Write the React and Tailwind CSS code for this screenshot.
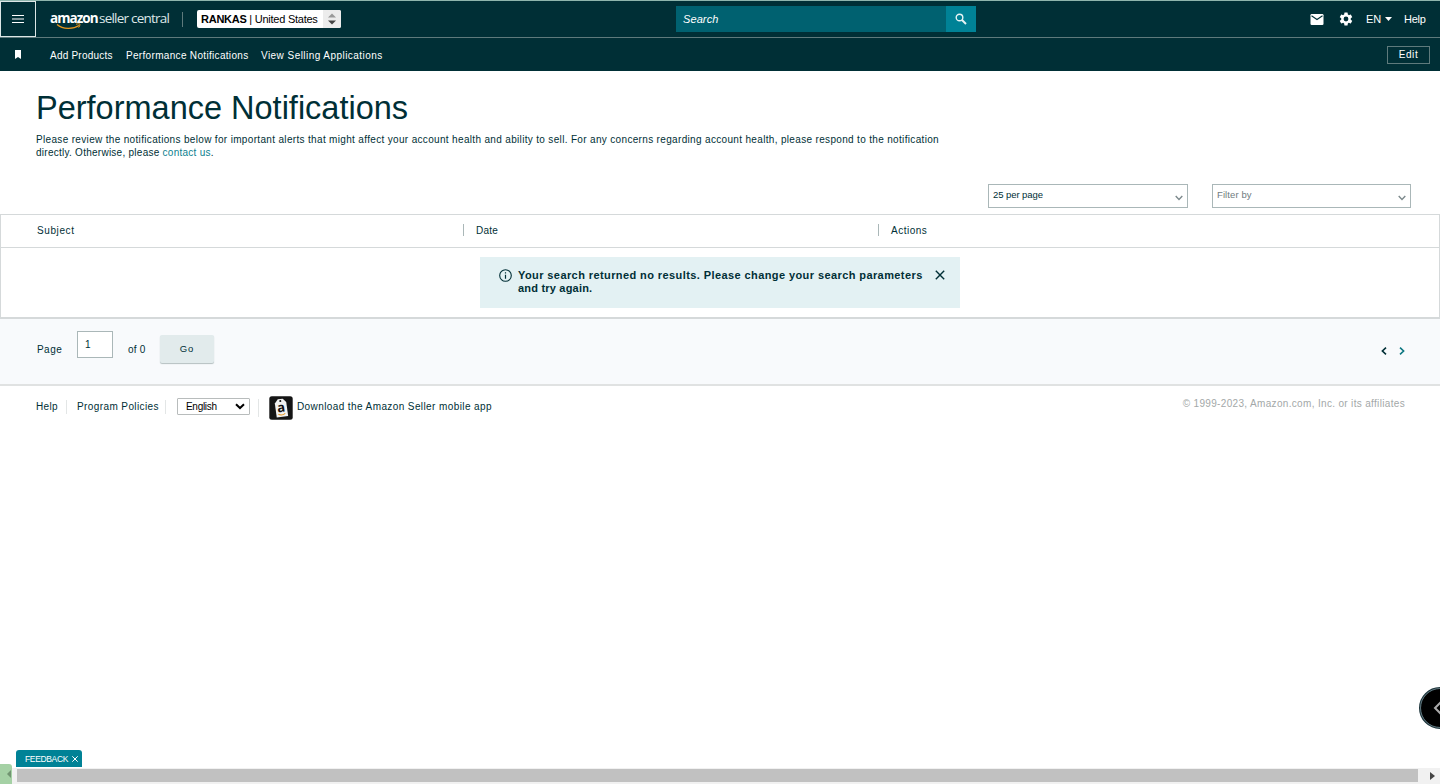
import React from "react";

const Chevron = ({ className }) => (
  <svg className={className} width="8" height="6" viewBox="0 0 8 6" fill="none" stroke="currentColor" strokeWidth="1.4">
    <path d="M0.7 1 L4 4.4 L7.3 1" />
  </svg>
);

function TopBar() {
  return (
    <header className="flex h-[38px] items-stretch border-t border-b border-t-[#8fb5ad] border-b-[#5e7a7c] bg-[#002f36] text-white">
      <button className="flex w-[36px] shrink-0 items-center justify-center border border-[#dce6e6]">
        <svg width="12" height="10" viewBox="0 0 12 10" stroke="#fff" strokeWidth="1.2">
          <path d="M0 1.5h12M0 5h12M0 8.5h12" />
        </svg>
      </button>
      <div className="ml-[14px] w-[120px] shrink-0 pt-[8px]">
        <div className="flex h-[18px] items-center whitespace-nowrap font-['Open_Sans',sans-serif] text-[13.5px] leading-[18px]">
          <span className="w-[49px] text-[13.5px] font-bold tracking-[-0.95px]">amazon</span>
          <span className="tracking-[-0.78px] text-[#dce6e8]">seller central</span>
        </div>
        <svg className="-mt-[4px] ml-[6px]" width="26" height="7" viewBox="0 0 26 7" fill="none" stroke="#e8961e" strokeWidth="1.3">
          <path d="M1 1.5C7 6.5 17 6.5 23 2.5" />
          <path d="M20 1.2C22.5 .6 24.2 .8 24 1.3C24 2.4 23.5 3.6 22.6 4.6" strokeWidth="1" />
        </svg>
      </div>
      <div className="mt-[11px] ml-[12px] h-[15px] w-px shrink-0 bg-[#5e7a7c]" />
      <div className="mt-[9px] ml-[14px] flex h-[18px] w-[144px] shrink-0 items-center justify-between rounded-[2px] bg-white pl-[4px] text-[11px] whitespace-nowrap text-black">
        <span className="tracking-[-0.25px]"><b>RANKAS</b> | United States</span>
        <span className="flex h-full w-[18px] items-center justify-center rounded-r-[2px] bg-[#ececec]">
          <svg width="8" height="12" viewBox="0 0 8 12">
            <path d="M0 4.5L4 .5L8 4.5z" fill="#999" />
            <path d="M0 7.5L4 11.5L8 7.5z" fill="#444" />
          </svg>
        </span>
      </div>
      <div className="mt-[5px] ml-[335px] flex h-[26px] w-[300px] shrink-0">
        <div className="w-[270px] bg-[#006170] pl-[7px] text-[11px] leading-[27px] tracking-[0.1px] italic">Search</div>
        <button className="flex w-[30px] items-center justify-center bg-[#008296]">
          <svg width="12" height="12" viewBox="0 0 12 12" fill="none" stroke="#e6f4f5">
            <circle cx="4.5" cy="4.5" r="3.3" strokeWidth="1.4" />
            <path d="M7 7L11 11" strokeWidth="2" />
          </svg>
        </button>
      </div>
      <div className="flex flex-1 items-center justify-end pr-[14px] text-[11px]">
        <svg width="14" height="11" viewBox="0 0 14 11">
          <rect x=".5" width="13" height="11" rx="1.2" fill="#fff" />
          <path d="M1.5 1.8L7 5.5L12.5 1.8" stroke="#002f36" strokeWidth="1.1" fill="none" />
        </svg>
        <svg className="ml-[14px]" width="16" height="16" viewBox="0 0 24 24" fill="#fff">
          <path d="M19.14 12.94c.04-.3.06-.61.06-.94s-.02-.64-.07-.94l2.03-1.58a.49.49 0 0 0 .12-.61l-1.92-3.32a.49.49 0 0 0-.59-.22l-2.39.96c-.5-.38-1.03-.7-1.62-.94L14.4 2.81a.48.48 0 0 0-.48-.41h-3.84a.47.47 0 0 0-.47.41l-.36 2.54c-.59.24-1.13.57-1.62.94l-2.39-.96a.48.48 0 0 0-.59.22L2.74 8.87a.47.47 0 0 0 .12.61l2.03 1.58c-.05.3-.09.63-.09.94s.02.64.07.94l-2.03 1.58a.49.49 0 0 0-.12.61l1.92 3.32c.12.22.37.29.59.22l2.39-.96c.5.38 1.03.7 1.62.94l.36 2.54c.05.24.24.41.48.41h3.84c.24 0 .44-.17.47-.41l.36-2.54c.59-.24 1.13-.56 1.62-.94l2.39.96c.22.08.47 0 .59-.22l1.92-3.32a.47.47 0 0 0-.12-.61zM12 15.6A3.6 3.6 0 1 1 12 8.4a3.6 3.6 0 0 1 0 7.2z" />
        </svg>
        <span className="ml-[12px] w-[15px] tracking-[-0.2px]">EN</span>
        <svg className="ml-[4px]" width="7" height="4" viewBox="0 0 7 4"><path d="M0 0h7L3.5 4z" fill="#fff" /></svg>
        <span className="ml-[12px] w-[22px] tracking-[-0.25px]">Help</span>
      </div>
    </header>
  );
}

function ShortcutBar() {
  return (
    <nav className="flex h-[33px] bg-[#002f36] pt-[8px] pr-[10px] pl-[15px] text-[10px] leading-[19px] whitespace-nowrap text-white">
      <svg className="mt-[4px]" width="6" height="9" viewBox="0 0 6 9"><path d="M0 0h6v9L3 7L0 9z" fill="#fff" /></svg>
      <span className="ml-[29px] w-[76px] tracking-[0.22px]">Add Products</span>
      <span className="w-[135px] tracking-[0.32px]">Performance Notifications</span>
      <span className="tracking-[0.45px]">View Selling Applications</span>
      <button className="ml-auto h-[18px] w-[43px] border border-[#5e7a7c] text-[10px] leading-[16px] tracking-[0.6px]">Edit</button>
    </nav>
  );
}

function Select({ label, className }) {
  return (
    <div className={"flex h-[24px] justify-between border border-[#aab7b8] pr-[4px] pl-[4px] text-[9.5px] leading-[20px] " + className}>
      <span>{label}</span>
      <Chevron className="mt-[10px] text-[#7c898c]" />
    </div>
  );
}

function Notice() {
  return (
    <div className="mx-auto mt-[9px] flex h-[51px] w-[480px] bg-[#e3f1f3] pt-[12px] pl-[19px]">
      <svg width="13" height="13" viewBox="0 0 13 13" fill="none" stroke="#002f36">
        <circle cx="6.5" cy="6.5" r="5.8" strokeWidth="1.1" />
        <path d="M6.5 5.7v4M6.5 3.2v1.3" strokeWidth="1.2" />
      </svg>
      <p className="ml-[6px] w-[416px] text-[11px] leading-[13px] font-bold tracking-[0.41px] whitespace-nowrap">
        Your search returned no results. Please change your search parameters
        <br />
        <span className="tracking-[0.2px]">and try again.</span>
      </p>
      <svg className="mt-[1px] ml-[1px]" width="10" height="10" viewBox="0 0 10 10" stroke="#002f36" strokeWidth="1.4"><path d="M.8 .8L9.2 9.2M9.2 .8L.8 9.2" /></svg>
    </div>
  );
}

function Pager() {
  return (
    <div className="flex h-[67px] border-b-2 border-[#e0e2e2] bg-[#f8fafc] pl-[37px] text-[10px] tracking-[0.4px]">
      <span className="mt-[24px] w-[40px] leading-[14px] tracking-[0.45px]">Page</span>
      <div className="mt-[12px] h-[27px] w-[36px] border border-[#aab7b8] bg-white pl-[7px] leading-[26px]">1</div>
      <span className="mt-[24px] ml-[15px] w-[32px] leading-[14px] tracking-[0.25px]">of 0</span>
      <button className="mt-[16px] h-[28px] w-[54px] rounded-[2px] bg-[#e2ebec] text-center text-[9.5px] leading-[28px] tracking-[1px] shadow-[0_1px_1px_#b4bfc0]">Go</button>
      <div className="mt-[28px] mr-[35px] ml-auto flex gap-[12px]">
        <svg width="6" height="8" viewBox="0 0 6 8" fill="none" stroke="#002f36" strokeWidth="1.6"><path d="M5 .7L1.4 4L5 7.3" /></svg>
        <svg width="6" height="8" viewBox="0 0 6 8" fill="none" stroke="#0b7680" strokeWidth="1.6"><path d="M1 .7L4.6 4L1 7.3" /></svg>
      </div>
    </div>
  );
}

function Footer() {
  return (
    <footer className="flex h-[40px] items-start pt-[10px] pl-[36px] text-[10px] leading-[22px] whitespace-nowrap">
      <span className="w-[30px] tracking-[0.3px]">Help</span>
      <span className="mt-[4px] h-[14px] w-px bg-[#e3e6e6]" />
      <span className="ml-[10px] w-[88px] tracking-[0.4px]">Program Policies</span>
      <span className="mt-[4px] h-[14px] w-px bg-[#e3e6e6]" />
      <div className="mt-[2px] ml-[11px] flex h-[17px] w-[73px] items-center justify-between rounded-[1px] border border-[#b8bcbc] pr-[4px] pl-[8px] leading-[17px] text-black">
        <span className="tracking-[-0.3px]">English</span>
        <svg width="10" height="7" viewBox="0 0 10 7" fill="none" stroke="#000" strokeWidth="2"><path d="M1 1.2L5 5L9 1.2" /></svg>
      </div>
      <span className="mt-[3px] ml-[8px] h-[18px] w-px bg-[#e3e6e6]" />
      <svg className="ml-[10px] shrink-0" width="24" height="24" viewBox="0 0 24 24">
        <rect x=".3" y=".3" width="23.4" height="23.4" rx="2.5" fill="#151515" />
        <g transform="rotate(-8 12 12)">
          <path d="M6.5 6.8L10 3h5l3 3.8v14H6.5z" fill="#f2f2f2" />
          <circle cx="12.3" cy="5" r="1" fill="#151515" />
          <text x="12.2" y="16" textAnchor="middle" fontSize="13" fontWeight="700" fill="#111" fontFamily="Open Sans, sans-serif">a</text>
          <path d="M8.5 17.8c2 1.3 5 1.3 7 0" stroke="#e8961e" fill="none" />
        </g>
      </svg>
      <span className="ml-[4px] tracking-[0.4px]">Download the Amazon Seller mobile app</span>
      <span className="mr-[35px] ml-auto leading-[16px] tracking-[0.33px] text-[#a3a8a8]">© 1999-2023, Amazon.com, Inc. or its affiliates</span>
    </footer>
  );
}

export default function App() {
  return (
    <div className="relative h-[784px] w-[1440px] overflow-hidden bg-white font-['Liberation_Sans',Arial,sans-serif] text-[#002f36]">
      <TopBar />
      <ShortcutBar />
      <section className="h-[113px] pt-[17px] pl-[36px]">
        <h1 className="text-[32.5px] leading-[40px] whitespace-nowrap">Performance Notifications</h1>
        <p className="mt-[5px] text-[10px] leading-[13px] tracking-[0.333px] whitespace-nowrap">
          Please review the notifications below for important alerts that might affect your account health and ability to sell. For any concerns regarding account health, please respond to the notification
          <br />
          <span className="tracking-[0.26px]">directly. Otherwise, please <a className="text-[#0b7f8f]">contact us</a>.</span>
        </p>
      </section>
      <div className="flex h-[30px] justify-end gap-[24px] pr-[29px]">
        <Select label="25 per page" className="w-[200px] tracking-[-0.07px]" />
        <Select label="Filter by" className="w-[199px] tracking-[0.1px] text-[#6f7c80]" />
      </div>
      <section className="h-[105px] border border-b-2 border-[#d5d9da]">
        <div className="flex h-[33px] border-b border-[#d5d9da] pl-[36px] text-[10px] leading-[32px] tracking-[0.4px]">
          <span className="w-[426px] tracking-[0.6px]">Subject</span>
          <span className="mt-[9px] h-[12px] w-px bg-[#aab7b8]" />
          <span className="w-[414px] pl-[12px] tracking-[0.2px]">Date</span>
          <span className="mt-[9px] h-[12px] w-px bg-[#aab7b8]" />
          <span className="pl-[12px] tracking-[0.5px]">Actions</span>
        </div>
        <Notice />
      </section>
      <Pager />
      <Footer />

      <button className="absolute top-[687px] left-[1419px] flex h-[42px] w-[42px] items-center rounded-full border-2 border-[#1c343b] bg-black pl-[12px] outline-1 -outline-offset-2 outline-[#60747b]">
        <svg width="10" height="16" viewBox="0 0 10 16" fill="none" stroke="#aaa" strokeWidth="2"><path d="M8 2L2 8L8 14" /></svg>
      </button>
      <div className="absolute bottom-0 left-0 flex h-[16px] w-full bg-[#f1f1f1] pr-[22px] pl-[17px]">
        <div className="mt-px h-[13px] flex-1 bg-[#c1c1c1]" />
      </div>
      <svg className="absolute top-[772px] left-[1430px]" width="5" height="8" viewBox="0 0 5 8"><path d="M0 0L5 4L0 8z" fill="#444" /></svg>
      <div className="absolute top-[764px] left-0 flex h-[20px] w-[12px] items-center justify-end rounded-tr-[3px] bg-[#a5d1a5] pr-[1px]">
        <svg width="4" height="8" viewBox="0 0 4 8"><path d="M4 0L0 4L4 8z" fill="#719471" /></svg>
      </div>
      <button className="absolute top-[750px] left-[16px] flex h-[17px] w-[66px] items-center rounded-t-[3px] bg-[#008296] pl-[9px] text-[8.5px] leading-[17px] text-white">
        <span className="mt-px w-[47px] text-left tracking-[-0.35px]">FEEDBACK</span>
        <svg width="6" height="6" viewBox="0 0 6 6" stroke="#fff" strokeWidth="1"><path d="M.3 .3L5.7 5.7M5.7 .3L.3 5.7" /></svg>
      </button>
    </div>
  );
}
